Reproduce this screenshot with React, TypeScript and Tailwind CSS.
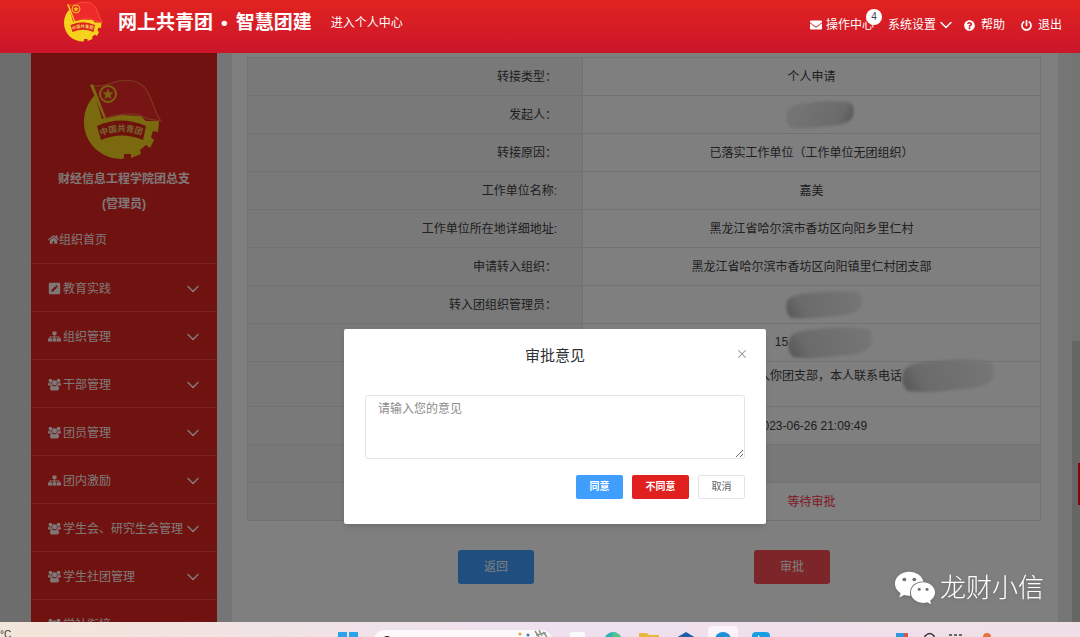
import { useState } from 'react';
import type { ReactNode } from 'react';
import { ChevronDown, X } from 'lucide-react';
import { FaEnvelope, FaHome, FaPenSquare, FaPowerOff, FaQuestionCircle, FaWeixin } from 'react-icons/fa';

function GroupIcon({ className }: { className?: string }) {
  return (
    <svg viewBox="0 0 26 24" className={className} fill="currentColor" aria-hidden="true">
      <circle cx="5" cy="4.5" r="3.8" />
      <circle cx="21" cy="4.5" r="3.8" />
      <circle cx="13" cy="8.5" r="5" />
      <path d="M0 13.5C0 10 1 8.5 2.5 8.5Q5 10 7 9.500Q7.500 12 9 14H2Q0 14 0 13.500ZM26 13.500C26 10 25 8.500 23.500 8.500Q21 10 19 9.500Q18.500 12 17 14h7Q26 14 26 13.500Z" />
      <path d="M4 20.500C4 15.500 6 13.500 8.500 13.500Q13 17 17.500 13.500C20 13.500 22 15.500 22 20.500Q22 24 18.500 24h-11Q4 24 4 20.500Z" />
    </svg>
  );
}

function TreeIcon({ className }: { className?: string }) {
  return (
    <svg viewBox="0 0 26 24" className={className} fill="currentColor" aria-hidden="true">
      <path d="M9 2h8v7h-3v3h9v4h3v6h-8v-6h3v-2h-7v2h3v6H9v-6h3v-2H5v2h3v6H0v-6h3v-4h9V9H9Z" />
    </svg>
  );
}

const menu = [
  { label: '教育实践', Icon: FaPenSquare },
  { label: '组织管理', Icon: TreeIcon },
  { label: '干部管理', Icon: GroupIcon },
  { label: '团员管理', Icon: GroupIcon },
  { label: '团内激励', Icon: TreeIcon },
  { label: '学生会、研究生会管理', Icon: GroupIcon },
  { label: '学生社团管理', Icon: GroupIcon },
  { label: '学社衔接', Icon: GroupIcon },
];

function Emblem({ id, className }: { id: string; className: string }) {
  return (
    <svg viewBox="0 0 80 80" className={className} aria-hidden="true">
      <path
        d="M11 15C4 22 0 31 0 42c0 21 17 37 38 37l2-1v-4h7v4l10-4-1-4 6-5 4 3 4-8-3-3 2-6 5 1 1-11h-13l-5-5-20-1-19 4Z"
        fill="#f5d21e"
      />
      <path
        d="M9 6c10 1 15-2 22-4s19-3 27 3c6 4 9 14 12 22 2 5 4 10 7 14-6-2-10 0-15-3-7-5-20-6-41 0Z"
        fill="#ee2a2a"
        stroke="#ff6a3c"
        strokeWidth="1.2"
      />
      <path d="M6 5l3-1 13 34-2 1Z" fill="#f5d21e" />
      <circle cx="24" cy="14" r="8" fill="none" stroke="#f5c21e" strokeWidth="2" />
      <path d="M24 8.5l1.5 3.7 4 .3-3 2.6 1 3.9-3.5-2.1-3.5 2.1 1-3.9-3-2.6 4-.3Z" fill="#f5c21e" />
      <path d="M13 46q24-11 49 0l-3 14q-21-9-42 0Z" fill="#dd241a" />
      <path id={id} d="M17 56q21-9 43 0" fill="none" />
      <text fontSize="8.4" fontWeight="700" fill="#f5c860">
        <textPath href={`#${id}`}>中国共青团</textPath>
      </text>
    </svg>
  );
}

function Smudge({ id, w, h, edge }: { id: string; w: number; h: number; edge: 'left' | 'right' }) {
  return (
    <svg width={w} height={h} viewBox="0 0 100 36" preserveAspectRatio="none" className="inline-block overflow-visible align-middle" aria-hidden="true">
      <defs>
        <filter id={`${id}-blur`} x="-20%" y="-20%" width="140%" height="140%">
          <feGaussianBlur stdDeviation="1.8" />
        </filter>
        <linearGradient id={id} x1={edge === 'left' ? '0' : '1'} x2={edge === 'left' ? '1' : '0'} y1="0.6" y2="0.4">
          <stop offset="0" stopColor="#b4b4b4" />
          <stop offset="0.2" stopColor="#d6d6d6" />
          <stop offset="1" stopColor="#ebebeb" />
        </linearGradient>
      </defs>
      <path d="M2 12Q8 4 30 3Q64-2 94 2Q103 6 98 22Q88 32 60 32Q30 37 6 34Q-3 26 2 12Z" fill={`url(#${id})`} filter={`url(#${id}-blur)`} />
    </svg>
  );
}

function Header() {
  return (
    <header className="flex h-[53px] shrink-0 items-start bg-linear-to-b from-[#e1231f] to-[#cb152a] pr-[18px] pl-16 text-white">
      <Emblem id="emblem-top" className="mt-px h-[42px] w-10" />
      <h1 className="ml-3.5 flex h-[46px] items-center gap-2 text-[19px] font-bold">
        <span>网上共青团</span>
        <span>•</span>
        <span>智慧团建</span>
      </h1>
      <a href="#center" className="ml-[19px] flex h-[46px] items-center">进入个人中心</a>
      <nav className="ml-auto flex h-[50px] items-center">
        <a href="#ops" className="relative flex items-center gap-1">
          <FaEnvelope className="h-3 w-3" />
          操作中心
          <span className="absolute -top-2 -right-2 flex h-4 w-4 items-center justify-center rounded-full bg-white text-[10px] text-gray-700">4</span>
        </a>
        <button className="ml-3.5 flex items-center gap-1">
          系统设置
          <ChevronDown className="-mx-1 h-5 w-5" strokeWidth={1.8} />
        </button>
        <a href="#help" className="ml-3 flex items-center gap-1.5">
          <FaQuestionCircle className="h-[11px] w-[11px]" />
          帮助
        </a>
        <a href="#logout" className="ml-4 flex items-center gap-1.5">
          <FaPowerOff className="h-[11px] w-[11px]" />
          退出
        </a>
      </nav>
    </header>
  );
}

function Sidebar() {
  return (
    <aside className="w-[186px] shrink-0 bg-[#e0241f] text-[#fff0f0]">
      <div className="flex flex-col items-center pt-[27px] text-center font-bold">
        <Emblem id="emblem-side" className="h-20 w-20" />
        <p className="mt-1.5 leading-[26px]">财经信息工程学院团总支</p>
        <p className="leading-6">(管理员)</p>
      </div>
      <a href="#home" className="flex h-12 items-center border-b border-[#ee453f] pl-[17px]">
        <FaHome className="h-[11px] w-[11px]" />
        组织首页
      </a>
      {menu.map(({ label, Icon }) => (
        <button key={label} className="flex h-12 w-full items-center border-b border-[#ee453f] pt-0.5 pr-3.5 pl-[17px] whitespace-nowrap">
          <Icon className="mr-0.5 h-[13px] w-[13px] shrink-0" />
          {label}
          <ChevronDown className="ml-auto h-5 w-5 shrink-0" strokeWidth={2} />
        </button>
      ))}
    </aside>
  );
}

function Row({ label, children, h = 'h-[38px]' }: { label: string; children?: ReactNode; h?: string }) {
  return (
    <tr className={h}>
      <th scope="row" className="border border-[#e4e4e4] bg-[#f2f2f2] pr-[25px] text-right font-normal">{label}</th>
      <td className="border border-[#e4e4e4] text-center">{children}</td>
    </tr>
  );
}

function Detail() {
  return (
    <section className="min-w-0 flex-1 bg-white pt-1 pr-[17px] pl-[15px]">
      <table className="w-full table-fixed border-collapse text-[#404040]">
        <colgroup>
          <col className="w-[335px]" />
          <col />
        </colgroup>
        <tbody>
          <Row label="转接类型：">个人申请</Row>
          <Row label="发起人："><span className="pl-4"><Smudge id="s1" w={68} h={28} edge="right" /></span></Row>
          <Row label="转接原因：">已落实工作单位（工作单位无团组织）</Row>
          <Row label="工作单位名称:">嘉美</Row>
          <Row label="工作单位所在地详细地址:">黑龙江省哈尔滨市香坊区向阳乡里仁村</Row>
          <Row label="申请转入组织：">黑龙江省哈尔滨市香坊区向阳镇里仁村团支部</Row>
          <Row label="转入团组织管理员："><span className="pl-6"><Smudge id="s2" w={76} h={28} edge="left" /></span></Row>
          <Row label=""><span className="pl-6">15<Smudge id="s3" w={84} h={32} edge="left" /></span></Row>
          <Row label="" h="h-[45px]">
            <div className="mb-4 flex h-[26px] items-center justify-end pr-[46px]">
              入你团支部，本人联系电话
              <Smudge id="s4" w={92} h={34} edge="left" />
            </div>
          </Row>
          <Row label="">2023-06-26 21:09:49</Row>
          <tr className="h-[38px]">
            <td colSpan={2} className="border border-[#e4e4e4] bg-[#f0f0f0]" />
          </tr>
          <Row label=""><span className="text-[#ff3046]">等待审批</span></Row>
        </tbody>
      </table>
      <div className="flex justify-center gap-[220px] pt-[29px] text-white">
        <button className="h-[34px] w-[76px] rounded-[3px] bg-[#409eff]">返回</button>
        <button className="h-[34px] w-[76px] rounded-[3px] bg-[#fa4c54]">审批</button>
      </div>
    </section>
  );
}

function ApprovalDialog() {
  const [opinion, setOpinion] = useState('');

  return (
    <div className="absolute inset-0 flex items-start justify-center bg-black/50 pt-[276px] pl-[30px]">
      <div role="dialog" aria-labelledby="dialog-title" className="w-[422px] rounded-[2px] bg-white px-[21px] pb-[25px] shadow-md">
        <div className="relative flex h-[66px] items-start justify-center pt-4">
          <h2 id="dialog-title" className="text-[15px] leading-[22px] text-[#303133]">审批意见</h2>
          <button aria-label="关闭" className="absolute top-[18px] -right-1 text-[#909399]">
            <X className="h-3.5 w-3.5" strokeWidth={1.8} />
          </button>
        </div>
        <textarea
          aria-label="审批意见"
          placeholder="请输入您的意见"
          value={opinion}
          onChange={(e) => setOpinion(e.target.value)}
          className="block h-16 w-full rounded-[3px] border border-[#e2e4e9] px-3 py-1 leading-[18px] placeholder:text-[#8a8a8a] focus:outline-none"
        />
        <div className="mt-4 flex justify-end gap-[9px] text-[10px]">
          <button className="h-6 w-[47px] rounded-[2px] bg-[#409eff] font-bold text-white">同意</button>
          <button className="h-6 w-[57px] rounded-[2px] bg-[#e0201f] font-bold text-white">不同意</button>
          <button className="h-6 w-[47px] rounded-[2px] border border-[#e2e4e9] text-[#606266]">取消</button>
        </div>
      </div>
    </div>
  );
}

function Taskbar() {
  return (
    <footer className="flex h-[15px] shrink-0 items-start overflow-hidden bg-linear-to-r from-[#f2e6d9] via-[#efe0ef] to-[#f0dfe6]">
      <span className="w-[338px] pt-1.5 text-[10px] text-[#333333]">°C</span>
      <svg className="mt-2.5 h-5 w-5" viewBox="0 0 20 20">
        <path d="M0 0h9v9H0zM11 0h9v9h-9z" fill="#2aa3e8" />
      </svg>
      <div className="mt-2 ml-[15px] flex h-6 w-[180px] items-start justify-between rounded-full bg-[#fdf8fa] pl-2">
        <svg className="mt-[5px] h-3 w-3" viewBox="0 0 12 12">
          <circle cx="6" cy="6" r="4" fill="none" stroke="#222" strokeWidth="2" />
        </svg>
        <svg className="h-5 w-9" viewBox="0 0 36 20">
          <circle cx="3" cy="4" r="1.5" fill="#e0a43c" />
          <circle cx="11" cy="5" r="1.5" fill="#3b78c4" />
          <path d="M18 1l4 6M22 0l3 6M26 2l4 5M19 5l10-2" stroke="#8a938c" strokeWidth="1.5" />
        </svg>
      </div>
      <svg className="mt-2.5 ml-[17px] h-4 w-4" viewBox="0 0 16 16">
        <rect width="15" height="15" rx="2" fill="#fbfbfb" />
      </svg>
      <svg className="mt-2.5 ml-[17px] h-5 w-5" viewBox="0 0 20 20">
        <circle cx="10" cy="9" r="9" fill="#30b3b5" />
        <path d="M10 0a9 9 0 0 1 9 9H9Z" fill="#55c48c" />
      </svg>
      <svg className="mt-2.5 ml-4 h-5 w-5" viewBox="0 0 20 20">
        <path d="M0 1h8l2 2h10v15H0z" fill="#e7b93a" />
      </svg>
      <svg className="mt-2.5 ml-[17px] h-5 w-5" viewBox="0 0 20 20">
        <path d="M10 0l10 6v10H0V6z" fill="#1f5fa8" />
      </svg>
      <div className="mt-1 ml-3 flex h-8 w-[30px] justify-center rounded-t bg-[#faf3f9] pt-1.5">
        <svg className="h-4 w-4" viewBox="0 0 16 16">
          <circle cx="8" cy="8" r="8" fill="#1b8fd8" />
          <path d="M9 5q4-2 6 3l-6 4Z" fill="#46c6c8" />
        </svg>
      </div>
      <svg className="mt-2.5 ml-3.5 h-[18px] w-[18px]" viewBox="0 0 18 18">
        <rect width="18" height="18" rx="4" fill="#189fe2" />
        <path d="M6 3l3 3-3 2Z" fill="#fff" />
      </svg>
      <svg className="mt-2.5 mr-[88px] ml-auto h-4 w-24" viewBox="0 0 96 16">
        <path d="M0 1h8v8H0z" fill="#2f9ae0" />
        <path d="M8 1h4v8H8z" fill="#d9564a" />
        <path d="M29 7V4q5-5 9 0v3" fill="none" stroke="#333" strokeWidth="1.5" />
        <path d="M53 3h3m2 0h3m2 0h3" stroke="#666" strokeWidth="2" />
        <circle cx="91" cy="5" r="4" fill="#e5743c" />
      </svg>
    </footer>
  );
}

export default function App() {
  return (
    <div className="relative flex h-screen flex-col overflow-hidden font-['Liberation_Sans','Noto_Sans_CJK_SC',sans-serif] text-xs">
      <Header />
      <main className="relative flex min-h-0 flex-1 overflow-hidden bg-[#dadada]">
        <div className="flex min-w-0 flex-1 gap-[15px] bg-[#eaeaea]">
          <div className="flex shrink-0 bg-[#dadada] pl-[31px]">
            <Sidebar />
          </div>
          <Detail />
        </div>
        <div className="w-3.5 shrink-0 bg-[#ececec]" />
        <div className="flex w-2 shrink-0 flex-col items-end bg-[#e6e6e6] pt-[288px]">
          <div className="flex w-full flex-1 flex-col items-end bg-[#cccccc] pt-[122px]">
            <div className="h-[42px] w-0.5 bg-[#ff1010]" />
          </div>
        </div>
        <ApprovalDialog />
      </main>
      <Taskbar />
      <div className="absolute right-9 bottom-7 flex items-center gap-1 text-white drop-shadow">
        <FaWeixin className="h-[42px] w-[42px]" />
        <span className="text-[26px] font-light">龙财小信</span>
      </div>
    </div>
  );
}
